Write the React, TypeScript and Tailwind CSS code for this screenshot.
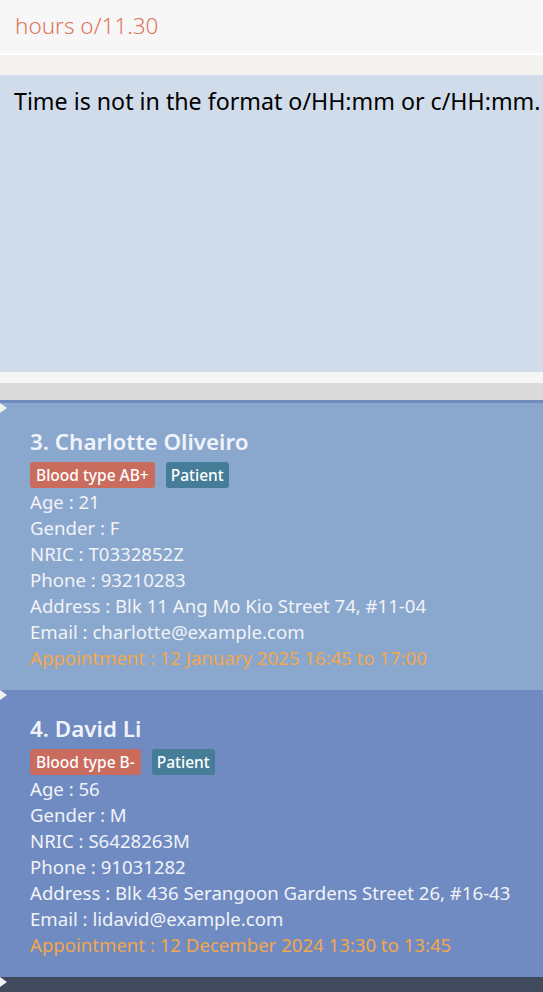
const font = { fontFamily: '"Noto Sans", "Open Sans", sans-serif' };

type Person = {
  idx: number;
  name: string;
  blood: string;
  age: string;
  gender: string;
  nric: string;
  phone: string;
  address: string;
  email: string;
  appt: string;
};

const people: Person[] = [
  {
    idx: 3,
    name: 'Charlotte Oliveiro',
    blood: 'AB+',
    age: '21',
    gender: 'F',
    nric: 'T0332852Z',
    phone: '93210283',
    address: 'Blk 11 Ang Mo Kio Street 74, #11-04',
    email: 'charlotte@example.com',
    appt: '12 January 2025 16:45 to 17:00',
  },
  {
    idx: 4,
    name: 'David Li',
    blood: 'B-',
    age: '56',
    gender: 'M',
    nric: 'S6428263M',
    phone: '91031282',
    address: 'Blk 436 Serangoon Gardens Street 26, #16-43',
    email: 'lidavid@example.com',
    appt: '12 December 2024 13:30 to 13:45',
  },
];

function Marker() {
  return (
    <div className="absolute left-0 top-0 w-0 h-0 border-y-[5px] border-y-transparent border-l-[7px] border-l-[#f2f2f2]" />
  );
}

function Card({ p, odd }: { p: Person; odd: boolean }) {
  return (
    <div className={`relative h-[287px] pl-[30px] pt-[24px] ${odd ? 'bg-[#8aa7cd]' : 'bg-[#6f8bc1]'}`}>
      <Marker />
      <div className="text-[22.4px] font-semibold text-[#f0f3fa] leading-[30px] whitespace-nowrap">
        {p.idx}. {p.name}
      </div>
      <div className="flex gap-[11px] mt-[5px] mb-[1px]">
        <span className="bg-[#c96b5d] text-white text-[15.5px] font-medium rounded-[3px] px-[6px] h-[26px] leading-[26px]">
          Blood type {p.blood}
        </span>
        <span className="bg-[#457c97] text-white text-[15.5px] font-medium rounded-[3px] px-[5px] h-[26px] leading-[26px]">
          Patient
        </span>
      </div>
      <div className="text-[18.6px] leading-[26px] text-[#f1f3f8] whitespace-nowrap">
        <div>Age : {p.age}</div>
        <div>Gender : {p.gender}</div>
        <div>NRIC : {p.nric}</div>
        <div>Phone : {p.phone}</div>
        <div>Address : {p.address}</div>
        <div>Email : {p.email}</div>
        <div className="text-[#f4a74a]">Appointment : {p.appt}</div>
      </div>
    </div>
  );
}

export default function App() {
  return (
    <div className="w-[543px] h-[992px] overflow-hidden bg-[#414a5c]" style={font}>
      <div className="h-[53px] bg-[#f7f7f7] pl-[15px] pt-[10px] text-[22.5px] font-light text-[#dd7560] leading-[32px]">
        hours o/11.30
      </div>
      <div className="h-[2px] bg-white" />
      <div className="h-[20px] bg-[#f3f2f1]" />
      <div className="h-[297px] bg-[#d1dceb] pl-[14px] pt-[10px] text-[23.2px] text-black leading-[32px] whitespace-nowrap overflow-hidden">
        Time is not in the format o/HH:mm or c/HH:mm.
      </div>
      <div className="h-[11px] bg-[#f5f5f5]" />
      <div className="h-[17px] bg-[#dadada]" />
      <div className="h-[3px] bg-[#6f8bc0]" />
      {people.map((p, i) => (
        <Card key={p.idx} p={p} odd={i % 2 === 0} />
      ))}
      <div className="relative">
        <Marker />
      </div>
    </div>
  );
}
